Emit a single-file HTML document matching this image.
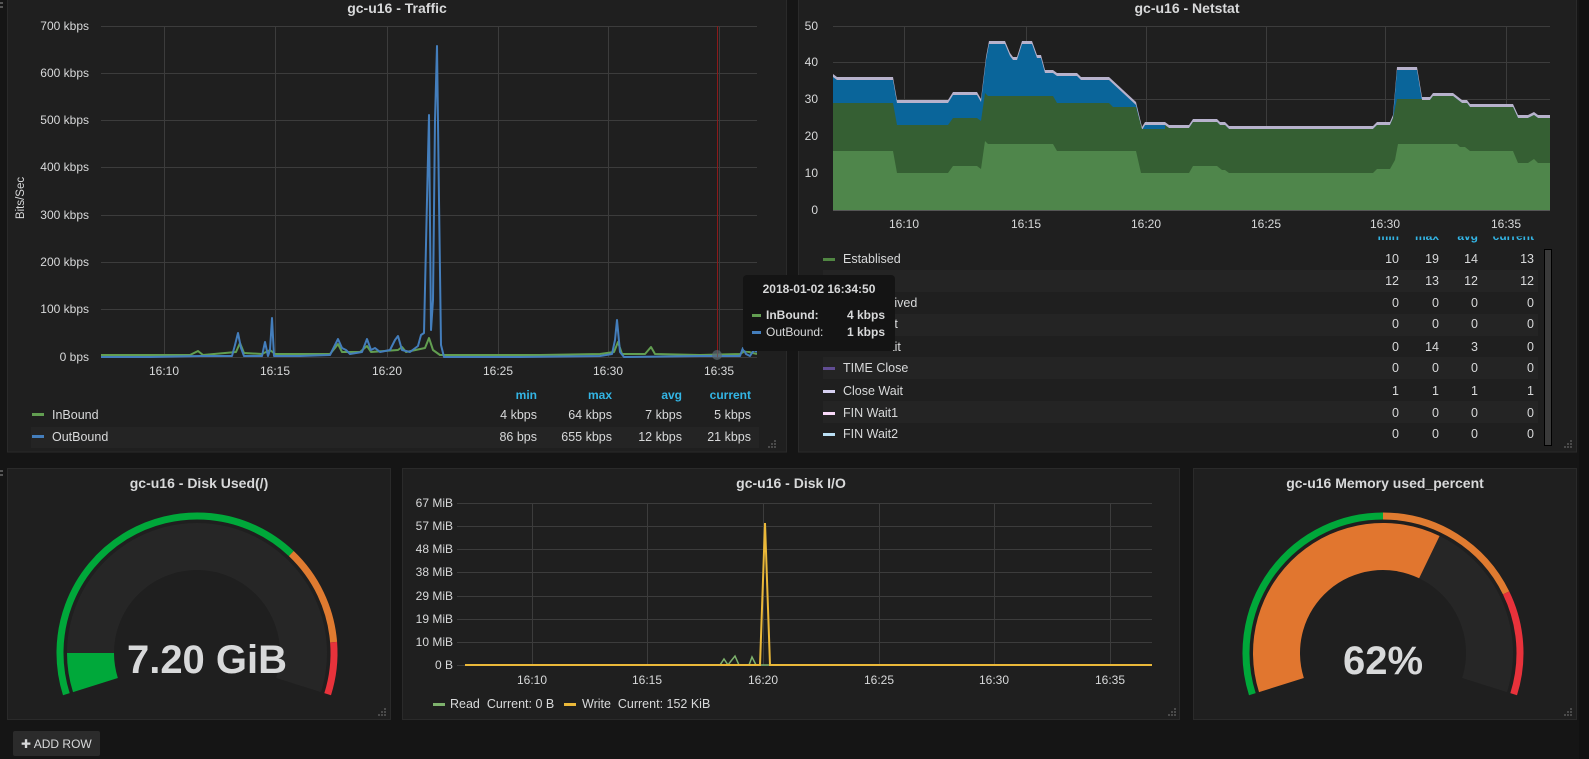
<!DOCTYPE html>
<html><head><meta charset="utf-8"><style>
html,body{margin:0;padding:0;background:#151515;width:1589px;height:759px;overflow:hidden}
svg{display:block}
text{font-family:"Liberation Sans",Arial,sans-serif}
</style></head><body>
<svg width="1589" height="759" viewBox="0 0 1589 759" xmlns="http://www.w3.org/2000/svg">
<defs>
<clipPath id="ct"><rect x="101" y="20" width="656" height="340"/></clipPath>
<clipPath id="cn"><rect x="833" y="20" width="717" height="191"/></clipPath>
<clipPath id="ch"><rect x="800" y="236.5" width="760" height="20"/></clipPath>
<g id="rs" fill="#4a4a4a"><rect x="8" y="0" width="2" height="2"/><rect x="5" y="3" width="2" height="2"/><rect x="8" y="3" width="2" height="2"/><rect x="2" y="6" width="2" height="2"/><rect x="5" y="6" width="2" height="2"/><rect x="8" y="6" width="2" height="2"/></g>
</defs>
<rect width="1589" height="759" fill="#151515"/>
<rect x="1579" y="0" width="10" height="759" fill="#111"/>
<g fill="#555"><rect x="0" y="2" width="3" height="2"/><rect x="0" y="6" width="3" height="2"/><rect x="0" y="470" width="3" height="2"/><rect x="0" y="474" width="3" height="2"/></g>

<g fill="#1f1f1f" stroke="#2a2a2a" stroke-width="1">
<rect x="7.5" y="-1" width="779" height="453"/>
<rect x="798.5" y="-1" width="778" height="453"/>
<rect x="7.5" y="468.5" width="383" height="251"/>
<rect x="402.5" y="468.5" width="777" height="251"/>
<rect x="1193.5" y="468.5" width="383" height="251"/>
</g>
<use href="#rs" x="766" y="440"/><use href="#rs" x="1562" y="440"/>
<use href="#rs" x="376" y="708"/><use href="#rs" x="1166" y="708"/><use href="#rs" x="1562" y="708"/>

<!-- TRAFFIC -->
<text x="397" y="13" fill="#d8d9da" font-size="14" font-weight="bold" text-anchor="middle">gc-u16 - Traffic</text>
<g stroke="#3c3c3c" stroke-width="1">
<line x1="101" y1="26.5" x2="757" y2="26.5"/><line x1="101" y1="73.5" x2="757" y2="73.5"/><line x1="101" y1="120.5" x2="757" y2="120.5"/><line x1="101" y1="167.5" x2="757" y2="167.5"/><line x1="101" y1="215.5" x2="757" y2="215.5"/><line x1="101" y1="262.5" x2="757" y2="262.5"/><line x1="101" y1="309.5" x2="757" y2="309.5"/><line x1="101" y1="357.5" x2="757" y2="357.5"/>
<line x1="164.5" y1="26" x2="164.5" y2="357"/><line x1="275.5" y1="26" x2="275.5" y2="357"/><line x1="387.5" y1="26" x2="387.5" y2="357"/><line x1="498.5" y1="26" x2="498.5" y2="357"/><line x1="608.5" y1="26" x2="608.5" y2="357"/><line x1="719.5" y1="26" x2="719.5" y2="357"/>
</g>
<g fill="#d8d9da" font-size="12" text-anchor="end">
<text x="89" y="30">700 kbps</text><text x="89" y="77">600 kbps</text><text x="89" y="124">500 kbps</text><text x="89" y="171">400 kbps</text><text x="89" y="219">300 kbps</text><text x="89" y="266">200 kbps</text><text x="89" y="313">100 kbps</text><text x="89" y="361">0 bps</text>
</g>
<text transform="translate(24,198) rotate(-90)" fill="#d8d9da" font-size="11.5" text-anchor="middle">Bits/Sec</text>
<g fill="#d8d9da" font-size="12" text-anchor="middle">
<text x="164" y="375">16:10</text><text x="275" y="375">16:15</text><text x="387" y="375">16:20</text><text x="498" y="375">16:25</text><text x="608" y="375">16:30</text><text x="719" y="375">16:35</text>
</g>
<g clip-path="url(#ct)" fill="none" stroke-width="2" stroke-linejoin="round">
<polyline stroke="#629e51" points="101,355 190,355 198,351 203,355 236,352 240,343 244,353 262,354 270,350 275,354 330,354 335,348 338,344 342,352 360,352 367,346 371,352 398,350 402,347 406,352 425,348 429,338 433,350 440,355 540,355 600,354 614,352 618,342 622,354 645,354 651,347 655,354 700,355 740,354 745,351 757,354"/>
<polyline stroke="#447ebc" points="101,357 150,357 200,356 232,356 235,345 238,333 241,348 244,356 262,356 265,342 268,356 270,350 272,318 274,356 300,356 330,355 335,345 338,339 342,348 346,350 350,354 362,352 367,339 371,350 375,348 380,352 390,350 395,340 398,336 402,350 410,352 418,346 421,335 424,333 427,200 429,115 431,330 433,300 435,120 437,46 439,200 441,345 444,357 520,357 600,356 612,354 615,340 617,320 620,352 624,357 700,356 740,356 743,348 746,354 750,356 754,350 757,352"/>
</g>
<line x1="717.5" y1="26" x2="717.5" y2="357" stroke="#8b1a1a" stroke-width="1"/>
<circle cx="717" cy="355" r="5" fill="#5a6a70" opacity="0.7"/>
<g fill="#33b5e5" font-size="12" font-weight="bold" text-anchor="end">
<text x="537" y="399">min</text><text x="612" y="399">max</text><text x="682" y="399">avg</text><text x="751" y="399">current</text>
</g>
<rect x="31" y="427" width="728" height="21" fill="#242424"/>
<rect x="32" y="413" width="12" height="3" fill="#629e51"/><rect x="32" y="435" width="12" height="3" fill="#447ebc"/>
<g fill="#d8d9da" font-size="12.5">
<text x="52" y="419">InBound</text><text x="52" y="441">OutBound</text>
</g>
<g fill="#d8d9da" font-size="12.5" text-anchor="end">
<text x="537" y="419">4 kbps</text><text x="612" y="419">64 kbps</text><text x="682" y="419">7 kbps</text><text x="751" y="419">5 kbps</text>
<text x="537" y="441">86 bps</text><text x="612" y="441">655 kbps</text><text x="682" y="441">12 kbps</text><text x="751" y="441">21 kbps</text>
</g>

<!-- NETSTAT -->
<text x="1187" y="13" fill="#d8d9da" font-size="14" font-weight="bold" text-anchor="middle">gc-u16 - Netstat</text>
<g stroke="#3c3c3c" stroke-width="1">
<line x1="833" y1="26.5" x2="1550" y2="26.5"/><line x1="833" y1="62.5" x2="1550" y2="62.5"/><line x1="833" y1="99.5" x2="1550" y2="99.5"/><line x1="833" y1="136.5" x2="1550" y2="136.5"/><line x1="833" y1="173.5" x2="1550" y2="173.5"/>
<line x1="904.5" y1="26" x2="904.5" y2="210"/><line x1="1026.5" y1="26" x2="1026.5" y2="210"/><line x1="1146.5" y1="26" x2="1146.5" y2="210"/><line x1="1266.5" y1="26" x2="1266.5" y2="210"/><line x1="1385.5" y1="26" x2="1385.5" y2="210"/><line x1="1506.5" y1="26" x2="1506.5" y2="210"/>
</g>
<g fill="#d8d9da" font-size="12" text-anchor="end">
<text x="818" y="30">50</text><text x="818" y="66">40</text><text x="818" y="103">30</text><text x="818" y="140">20</text><text x="818" y="177">10</text><text x="818" y="214">0</text>
</g>
<g fill="#d8d9da" font-size="12" text-anchor="middle">
<text x="904" y="228">16:10</text><text x="1026" y="228">16:15</text><text x="1146" y="228">16:20</text><text x="1266" y="228">16:25</text><text x="1385" y="228">16:30</text><text x="1506" y="228">16:35</text>
</g>
<g clip-path="url(#cn)">
<polygon fill="#b7b2cc" points="833,210 833,74 837,77 893,77 897,100 948,100 953,92 977,92 981,99 986,57 989,41 1005,41 1010,53 1013,57 1017,57 1022,41 1032,41 1037,55 1041,55 1045,70 1053,70 1057,73 1077,73 1081,77 1109,77 1136,102 1142,127 1145,122 1165,122 1169,125 1189,125 1193,119 1217,119 1220,122 1225,122 1229,126 1373,126 1377,122 1390,122 1393,115 1397,67 1417,67 1422,97 1430,97 1433,93 1453,93 1462,100 1467,100 1470,104 1513,104 1518,115 1528,115 1534,112 1538,115 1550,115 1550,210"/>
<polygon fill="#0a659a" points="833,210 833,77 837,80 893,80 897,103 948,103 953,95 977,95 981,102 986,60 989,44 1005,44 1010,56 1013,60 1017,60 1022,44 1032,44 1037,58 1041,58 1045,73 1053,73 1057,76 1077,76 1081,80 1109,80 1136,105 1142,130 1145,125 1165,125 1169,128 1189,128 1193,122 1217,122 1220,125 1225,125 1229,129 1373,129 1377,125 1390,125 1393,118 1397,70 1417,70 1422,100 1430,100 1433,96 1453,96 1462,103 1467,103 1470,107 1513,107 1518,118 1528,118 1534,115 1538,118 1550,118 1550,210"/>
<polygon fill="#355f33" points="833,210 833,103 893,103 897,125 948,125 953,118 977,118 981,121 985,93 988,96 1053,96 1057,103 1109,103 1113,107 1136,107 1142,129 1165,129 1165,125 1169,128 1189,128 1193,122 1217,122 1220,125 1225,125 1229,129 1373,129 1377,125 1390,125 1393,118 1397,99 1422,99 1422,100 1430,100 1433,96 1453,96 1462,103 1467,103 1470,107 1513,107 1518,118 1528,118 1534,115 1538,118 1550,118 1550,210"/>
<polygon fill="#4f864b" points="833,210 833,151 893,151 897,173 948,173 953,166 977,166 981,169 985,141 988,144 1053,144 1057,151 1136,151 1141,173 1189,173 1193,166 1217,166 1222,170 1225,170 1229,173 1373,173 1377,169 1390,169 1395,160 1398,144 1457,144 1460,147 1465,147 1470,151 1513,151 1518,163 1528,163 1534,159 1538,163 1550,163 1550,210"/>
</g>
<line x1="833" y1="210.5" x2="1550" y2="210.5" stroke="#555" stroke-width="1"/>
<g clip-path="url(#ch)" fill="#33b5e5" font-size="12" font-weight="bold" text-anchor="end">
<text x="1399" y="240">min</text><text x="1439" y="240">max</text><text x="1478" y="240">avg</text><text x="1534" y="240">current</text>
</g>
<g fill="#242424">
<rect x="823" y="270" width="715" height="22"/><rect x="823" y="314" width="715" height="22"/><rect x="823" y="357" width="715" height="22"/><rect x="823" y="401" width="715" height="22"/>
</g>
<rect x="1544.5" y="249.5" width="7" height="196" fill="#3a3a3a" stroke="#000" stroke-width="1"/>
<g>
<rect x="823" y="258" width="12" height="3" fill="#508642"/>
<rect x="823" y="280" width="12" height="3" fill="#cca300"/>
<rect x="823" y="302" width="12" height="3" fill="#0a437c"/>
<rect x="823" y="323" width="12" height="3" fill="#6d1f62"/>
<rect x="823" y="346" width="12" height="3" fill="#584477"/>
<rect x="823" y="367" width="12" height="3" fill="#614d93"/>
<rect x="823" y="390" width="12" height="3" fill="#d6d0f0"/>
<rect x="823" y="412" width="12" height="3" fill="#f9d9f9"/>
<rect x="823" y="433" width="12" height="3" fill="#badff4"/>
</g>
<g fill="#d8d9da" font-size="12.5">
<text x="843" y="263">Establised</text><text x="843" y="285">Listen</text><text x="843" y="307">SYN Recived</text><text x="843" y="328">SYN Sent</text><text x="843" y="351">TIME Wait</text><text x="843" y="372">TIME Close</text><text x="843" y="395">Close Wait</text><text x="843" y="417">FIN Wait1</text><text x="843" y="438">FIN Wait2</text>
</g>
<g fill="#d8d9da" font-size="12.5" text-anchor="end">
<text x="1399" y="263">10</text><text x="1439" y="263">19</text><text x="1478" y="263">14</text><text x="1534" y="263">13</text>
<text x="1399" y="285">12</text><text x="1439" y="285">13</text><text x="1478" y="285">12</text><text x="1534" y="285">12</text>
<text x="1399" y="307">0</text><text x="1439" y="307">0</text><text x="1478" y="307">0</text><text x="1534" y="307">0</text>
<text x="1399" y="328">0</text><text x="1439" y="328">0</text><text x="1478" y="328">0</text><text x="1534" y="328">0</text>
<text x="1399" y="351">0</text><text x="1439" y="351">14</text><text x="1478" y="351">3</text><text x="1534" y="351">0</text>
<text x="1399" y="372">0</text><text x="1439" y="372">0</text><text x="1478" y="372">0</text><text x="1534" y="372">0</text>
<text x="1399" y="395">1</text><text x="1439" y="395">1</text><text x="1478" y="395">1</text><text x="1534" y="395">1</text>
<text x="1399" y="417">0</text><text x="1439" y="417">0</text><text x="1478" y="417">0</text><text x="1534" y="417">0</text>
<text x="1399" y="438">0</text><text x="1439" y="438">0</text><text x="1478" y="438">0</text><text x="1534" y="438">0</text>
</g>

<rect x="743" y="275" width="152" height="76" rx="4" fill="#141414"/>
<text x="819" y="293" fill="#d8d9da" font-size="12" font-weight="bold" text-anchor="middle">2018-01-02 16:34:50</text>
<rect x="752" y="314" width="9" height="3" fill="#629e51"/><rect x="752" y="331" width="9" height="3" fill="#447ebc"/>
<text x="766" y="319" fill="#d8d9da" font-size="12" font-weight="bold">InBound:</text>
<text x="766" y="336" fill="#d8d9da" font-size="12">OutBound:</text>
<text x="885" y="319" fill="#d8d9da" font-size="12" font-weight="bold" text-anchor="end">4 kbps</text>
<text x="885" y="336" fill="#d8d9da" font-size="12" font-weight="bold" text-anchor="end">1 kbps</text>

<!-- DISK USED -->
<text x="199" y="488" fill="#d8d9da" font-size="14" font-weight="bold" text-anchor="middle">gc-u16 - Disk Used(/)</text>
<g fill="none" stroke-width="7">
<path d="M66.34,694.2 A137,137 0 0 1 291.3,553.6" stroke="#00a83a"/>
<path d="M291.3,553.6 A137,137 0 0 1 333.6,642.2" stroke="#e07b30"/>
<path d="M333.6,642.2 A137,137 0 0 1 327.66,694.2" stroke="#e8323b"/>
</g>
<path d="M73.02,692.09 A130,130 0 1 1 320.98,692.09 L276.16,677.96 A83,83 0 1 0 117.84,677.96 Z" fill="#262626"/>
<path d="M73.02,692.09 A130,130 0 0 1 67,653 L114,653 A83,83 0 0 0 117.84,677.96 Z" fill="#00a83a"/>
<text x="207" y="673" fill="#d8d9da" font-size="40" font-weight="bold" text-anchor="middle">7.20 GiB</text>

<!-- DISK IO -->
<text x="791" y="488" fill="#d8d9da" font-size="14" font-weight="bold" text-anchor="middle">gc-u16 - Disk I/O</text>
<g stroke="#3c3c3c" stroke-width="1">
<line x1="457" y1="503.5" x2="1152" y2="503.5"/><line x1="457" y1="526.5" x2="1152" y2="526.5"/><line x1="457" y1="549.5" x2="1152" y2="549.5"/><line x1="457" y1="572.5" x2="1152" y2="572.5"/><line x1="457" y1="596.5" x2="1152" y2="596.5"/><line x1="457" y1="619.5" x2="1152" y2="619.5"/><line x1="457" y1="642.5" x2="1152" y2="642.5"/><line x1="457" y1="665.5" x2="1152" y2="665.5"/>
<line x1="532.5" y1="503" x2="532.5" y2="665"/><line x1="647.5" y1="503" x2="647.5" y2="665"/><line x1="763.5" y1="503" x2="763.5" y2="665"/><line x1="879.5" y1="503" x2="879.5" y2="665"/><line x1="994.5" y1="503" x2="994.5" y2="665"/><line x1="1110.5" y1="503" x2="1110.5" y2="665"/>
</g>
<g fill="#d8d9da" font-size="12" text-anchor="end">
<text x="453" y="507">67 MiB</text><text x="453" y="530">57 MiB</text><text x="453" y="553">48 MiB</text><text x="453" y="576">38 MiB</text><text x="453" y="600">29 MiB</text><text x="453" y="623">19 MiB</text><text x="453" y="646">10 MiB</text><text x="453" y="669">0 B</text>
</g>
<g fill="#d8d9da" font-size="12" text-anchor="middle">
<text x="532" y="684">16:10</text><text x="647" y="684">16:15</text><text x="763" y="684">16:20</text><text x="879" y="684">16:25</text><text x="994" y="684">16:30</text><text x="1110" y="684">16:35</text>
</g>
<polyline fill="none" stroke="#7eb26d" stroke-width="1.5" points="465,665 720,665 724,659 728,665 731,661 735,656 739,665 749,665 752,657 756,665 1152,665"/>
<polyline fill="none" stroke="#eab839" stroke-width="2" points="465,665 760,665 763,580 765,523 767,580 770,665 1152,665"/>
<rect x="433" y="703" width="12" height="3" fill="#7eb26d"/>
<rect x="564" y="703" width="12" height="3" fill="#eab839"/>
<g fill="#d8d9da" font-size="12.5">
<text x="450" y="708">Read&#160; Current: 0 B</text>
<text x="582" y="708">Write&#160; Current: 152 KiB</text>
</g>

<!-- MEMORY -->
<text x="1385" y="488" fill="#d8d9da" font-size="14" font-weight="bold" text-anchor="middle">gc-u16 Memory used_percent</text>
<g fill="none" stroke-width="7">
<path d="M1252.34,694.2 A137,137 0 0 1 1383,516" stroke="#00a83a"/>
<path d="M1383,516 A137,137 0 0 1 1506.1,592.9" stroke="#e07b30"/>
<path d="M1506.1,592.9 A137,137 0 0 1 1513.66,694.2" stroke="#e8323b"/>
</g>
<path d="M1259.02,692.09 A130,130 0 1 1 1506.98,692.09 L1462.16,677.96 A83,83 0 1 0 1303.84,677.96 Z" fill="#262626"/>
<path d="M1259.02,692.09 A130,130 0 0 1 1439.58,535.96 L1419.12,578.28 A83,83 0 0 0 1303.84,677.96 Z" fill="#e1762f"/>
<text x="1383" y="674" fill="#d8d9da" font-size="40" font-weight="bold" text-anchor="middle">62%</text>

<rect x="13" y="731" width="87" height="25" rx="2" fill="#2b2b2b"/>
<text x="21" y="748" fill="#d8d9da" font-size="12">✚ ADD ROW</text>
</svg>
</body></html>
